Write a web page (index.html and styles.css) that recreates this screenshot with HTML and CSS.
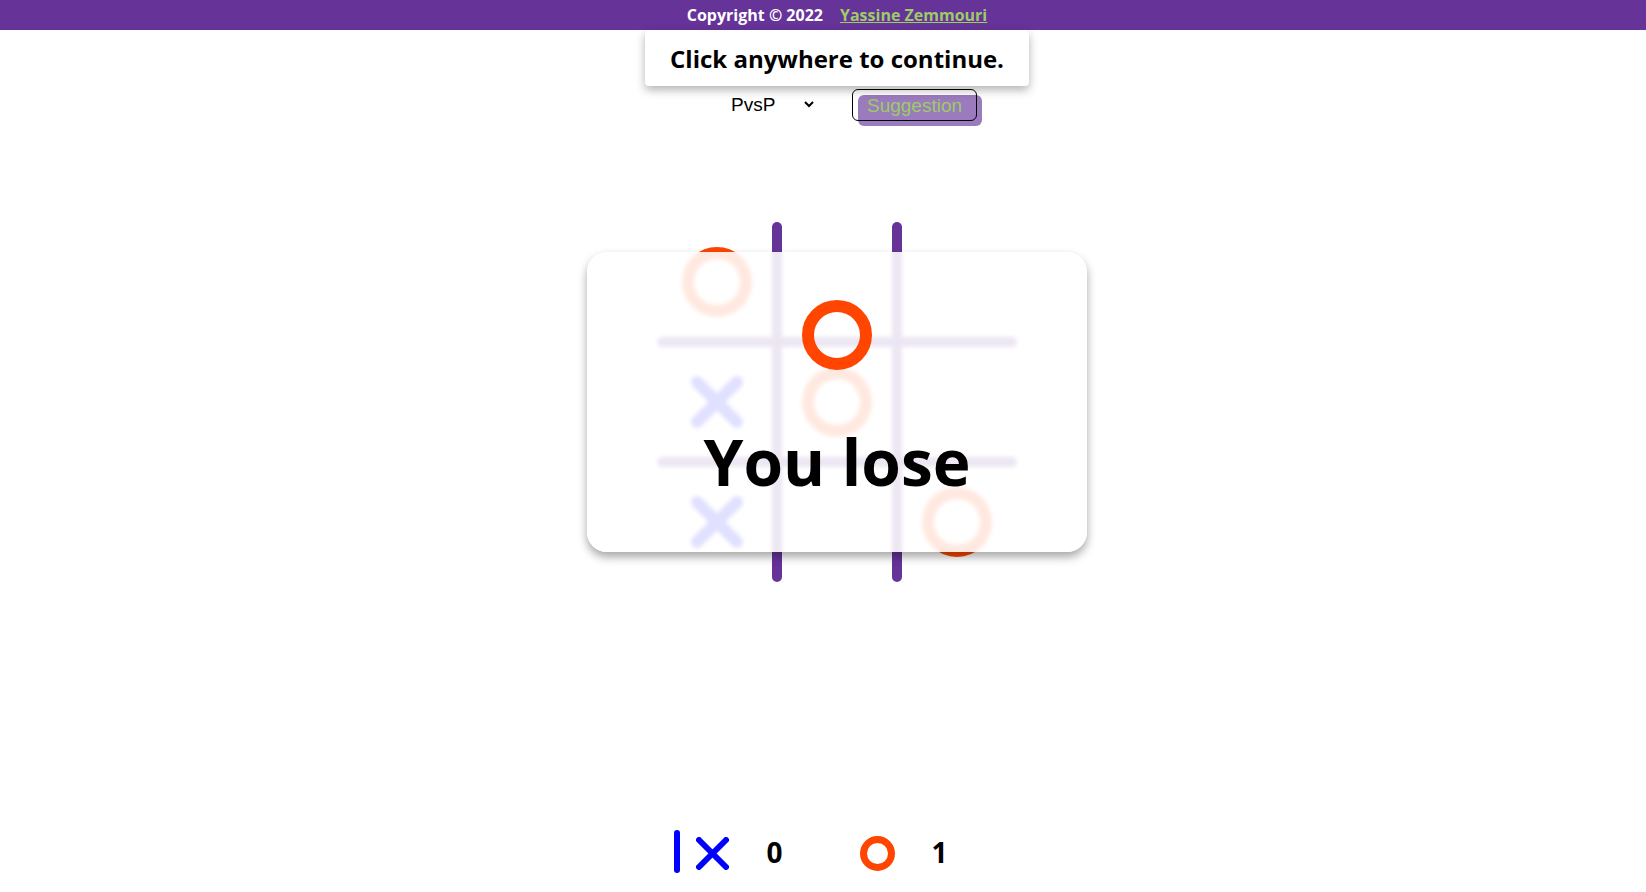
FILE: index.html
```html
<!DOCTYPE html>
<html lang="en">
<head>
<meta charset="utf-8">
<title>Tic Tac Toe</title>
<link rel="stylesheet" href="styles.css">
</head>
<body>
<header class="topbar">
  <span class="copy">Copyright © 2022</span>
  <a class="author" href="#">Yassine Zemmouri</a>
</header>
<main class="game">
  <div class="toast">Click anywhere to continue.</div>

  <div class="controls">
    <select class="mode">
      <option>PvsP</option>
      <option>PvsAI</option>
    </select>
    <button class="suggest">Suggestion</button>
  </div>

  <div class="board">
    <svg class="grid-lines" width="360" height="360" viewBox="0 0 360 360">
      <g stroke="#663399" stroke-width="10" stroke-linecap="round">
        <line x1="120" y1="5" x2="120" y2="355"/>
        <line x1="240" y1="5" x2="240" y2="355"/>
        <line x1="5" y1="120" x2="355" y2="120"/>
        <line x1="5" y1="240" x2="355" y2="240"/>
      </g>
    </svg>
    <div class="cells">
      <div class="cell"><svg class="mark" viewBox="0 0 70 70"><circle cx="35" cy="35" r="29" fill="none" stroke="#ff4500" stroke-width="12"/></svg></div>
      <div class="cell"></div>
      <div class="cell"></div>
      <div class="cell"><svg class="mark" viewBox="0 0 70 70"><g stroke="#0000ff" stroke-width="12" stroke-linecap="round"><line x1="15" y1="15" x2="55" y2="55"/><line x1="55" y1="15" x2="15" y2="55"/></g></svg></div>
      <div class="cell"><svg class="mark" viewBox="0 0 70 70"><circle cx="35" cy="35" r="29" fill="none" stroke="#ff4500" stroke-width="12"/></svg></div>
      <div class="cell"></div>
      <div class="cell"><svg class="mark" viewBox="0 0 70 70"><g stroke="#0000ff" stroke-width="12" stroke-linecap="round"><line x1="15" y1="15" x2="55" y2="55"/><line x1="55" y1="15" x2="15" y2="55"/></g></svg></div>
      <div class="cell"></div>
      <div class="cell"><svg class="mark" viewBox="0 0 70 70"><circle cx="35" cy="35" r="29" fill="none" stroke="#ff4500" stroke-width="12"/></svg></div>
    </div>

    <div class="result-card">
      <p class="result-text">You lose</p>
    </div>

    <svg class="floating-mark" viewBox="0 0 70 70"><circle cx="35" cy="35" r="29" fill="none" stroke="#ff4500" stroke-width="12"/></svg>
  </div>

  <div class="score">
    <div class="player player-x">
      <span class="turn-bar"></span>
      <svg class="score-icon" width="33" height="33" viewBox="0 0 33 33"><g stroke="#0000ff" stroke-width="6" stroke-linecap="round"><line x1="3" y1="3" x2="30" y2="30"/><line x1="30" y1="3" x2="3" y2="30"/></g></svg>
      <span class="points">0</span>
    </div>
    <div class="player player-o">
      <svg class="score-icon" width="35" height="35" viewBox="0 0 35 35"><circle cx="17.5" cy="17.5" r="14" fill="none" stroke="#ff4500" stroke-width="7"/></svg>
      <span class="points">1</span>
    </div>
  </div>
</main>
</body>
</html>
```

FILE: styles.css
```css
* {
  box-sizing: border-box;
}

html, body {
  margin: 0;
  padding: 0;
  background: #ffffff;
}

body {
  font-family: "Open Sans", "Liberation Sans", sans-serif;
  color: #000;
  height: 100vh;
  overflow: hidden;
}

.topbar {
  height: 30px;
  background: #663399;
  display: flex;
  align-items: center;
  justify-content: center;
  gap: 17px;
  padding-left: 28px;
  font-weight: 700;
  font-size: 16px;
  color: #ffffff;
}

.author {
  color: #9ccc65;
  text-decoration: underline;
}

.game {
  position: relative;
  height: calc(100vh - 30px);
  padding-left: 28px;
  display: flex;
  flex-direction: column;
  align-items: center;
}

.toast {
  position: absolute;
  top: 0;
  left: 28px;
  right: 0;
  margin: 0 auto;
  width: max-content;
  padding: 12px 25px 11px;
  background: #ffffff;
  border-radius: 4px;
  box-shadow: 0 4px 10px rgba(0, 0, 0, 0.3);
  font-size: 24px;
  font-weight: 700;
  z-index: 10;
}

.controls {
  margin-top: 59px;
  margin-left: 30px;
  display: flex;
  align-items: flex-start;
  gap: 35px;
  isolation: isolate;
}

.mode {
  width: 90px;
  height: 30px;
  font-family: "Liberation Sans", Arial, sans-serif;
  font-size: 19px;
  color: #000;
  border: none;
  background: transparent;
  padding: 0;
}

.suggest {
  position: relative;
  width: 125px;
  height: 32px;
  padding: 1px 14px 0;
  border: 1px solid #000;
  border-radius: 6px;
  background: transparent;
  color: #9ccc65;
  font-family: "Liberation Sans", Arial, sans-serif;
  font-size: 19px;
  text-align: left;
  line-height: 20px;
}

.suggest::before {
  content: "";
  position: absolute;
  top: 5px;
  left: 5px;
  right: -6px;
  bottom: -6px;
  background: rgba(102, 51, 153, 0.65);
  border-radius: 6px;
  z-index: -1;
}

.board {
  position: relative;
  width: 360px;
  height: 360px;
  margin-top: 101px;
}

.grid-lines {
  position: absolute;
  top: 0;
  left: 0;
}

.cells {
  position: relative;
  display: grid;
  grid-template-columns: repeat(3, 120px);
  grid-template-rows: repeat(3, 120px);
}

.cell {
  display: flex;
  align-items: center;
  justify-content: center;
}

.mark {
  width: 70px;
  height: 70px;
}

.result-card {
  position: absolute;
  left: -70px;
  top: 30px;
  width: 500px;
  height: 300px;
  border-radius: 20px;
  background: rgba(255, 255, 255, 0.88);
  -webkit-backdrop-filter: blur(2px);
  backdrop-filter: blur(2px);
  box-shadow: 0 5px 10px rgba(0, 0, 0, 0.35);
  z-index: 2;
  padding-top: 166px;
  text-align: center;
}

.result-text {
  margin: 0;
  font-size: 64px;
  font-weight: 700;
  line-height: 87px;
}

.floating-mark {
  position: absolute;
  left: 145px;
  top: 78px;
  width: 70px;
  height: 70px;
  z-index: 3;
}

.score {
  margin-top: auto;
  margin-right: 52px;
  margin-bottom: 19px;
  display: flex;
  align-items: center;
  gap: 77px;
}

.player {
  display: flex;
  align-items: center;
}

.turn-bar {
  width: 6px;
  height: 43px;
  border-radius: 3px;
  background: #0000ff;
  margin-right: 16px;
}

.score-icon {
  display: block;
}

.player-x .score-icon {
  margin-top: 4px;
}

.player-o .score-icon {
  margin-top: 4px;
}

.points {
  margin-left: 37px;
  font-size: 28px;
  font-weight: 700;
  line-height: 1;
}
```
